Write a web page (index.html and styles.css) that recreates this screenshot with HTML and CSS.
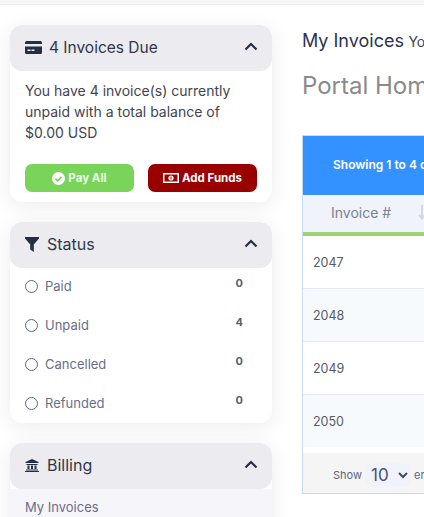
FILE: index.html
```html
<!DOCTYPE html>
<html>

<head>
    <meta content="width=device-width, initial-scale=1" name="viewport" />
    <title>My Invoices</title>
    <link rel="stylesheet" href="styles.css">
</head>

<body>
    <div class="topStrip"></div>
    <div class="page">
        <div class="sidebar">
            <div class="card">
                <div class="cardHead">
                    <svg class="headIcon" width="17" height="13" viewBox="0 0 17 13">
                        <path d="M1.5 0h14A1.5 1.5 0 0 1 17 1.5V3H0V1.5A1.5 1.5 0 0 1 1.5 0z" />
                        <path fill-rule="evenodd" d="M0 5.500h17v6A1.500 1.500 0 0 1 15.500 13h-14A1.500 1.500 0 0 1 0 11.500zM2.500 8.500v1.500h3V8.500zM6.500 8.500v1.500h3V8.500z" />
                    </svg>
                    <span class="headTitle headTitleDue">4 Invoices Due</span>
                    <svg class="chevron" width="14" height="9" viewBox="0 0 14 9">
                        <path d="M1.500 7.500L7 2l5.500 5.500" />
                    </svg>
                </div>
                <div class="dueBody">
                    <p class="dueText">You have 4 invoice(s) currently unpaid with a total balance of $0.00 USD</p>
                    <div class="dueButtons">
                        <button class="btn btnGreen">
                            <svg width="13" height="13" viewBox="0 0 13 13">
                                <circle cx="6.500" cy="6.500" r="6.500" fill="#fff" />
                                <path d="M3.500 6.700l2.100 2.100 3.900-4" fill="none" stroke="#7bd45a" stroke-width="1.700" />
                            </svg>
                            Pay All
                        </button>
                        <button class="btn btnRed">
                            <svg width="16" height="10" viewBox="0 0 16 10">
                                <path fill="#fff" fill-rule="evenodd" d="M0 0h16v10H0zM1.500 1.500v7h13v-7z" />
                                <circle cx="8" cy="5" r="2.600" fill="#fff" />
                                <rect x="7.500" y="3.500" width="1" height="3" fill="#990000" />
                            </svg>
                            Add Funds
                        </button>
                    </div>
                </div>
            </div>

            <div class="card">
                <div class="cardHead">
                    <svg class="headIcon headIconSmall" width="14" height="15" viewBox="0 0 14 15">
                        <path d="M0 0h14v1.500L8.800 7.500V15L5.200 12.500v-5L0 1.500z" />
                    </svg>
                    <span class="headTitle">Status</span>
                    <svg class="chevron" width="14" height="9" viewBox="0 0 14 9">
                        <path d="M1.500 7.500L7 2l5.500 5.500" />
                    </svg>
                </div>
                <div class="statusList">
                    <div class="statusRow"><span class="radio"></span><span class="statusName">Paid</span><span class="statusCount">0</span></div>
                    <div class="statusRow"><span class="radio"></span><span class="statusName">Unpaid</span><span class="statusCount">4</span></div>
                    <div class="statusRow"><span class="radio"></span><span class="statusName">Cancelled</span><span class="statusCount">0</span></div>
                    <div class="statusRow"><span class="radio"></span><span class="statusName">Refunded</span><span class="statusCount">0</span></div>
                </div>
            </div>

            <div class="card">
                <div class="cardHead">
                    <svg class="headIcon headIconSmall" width="14" height="13" viewBox="0 0 14 13">
                        <path d="M7 0l6.500 3v1H.5V3zM1.500 5h11v1h-11zM2.500 6.500h2v3.500h-2zM6 6.500h2v3.500H6zM9.500 6.500h2v3.500h-2zM1 10.500h12V11.500H1zM0 12h14v1H0z" />
                    </svg>
                    <span class="headTitle">Billing</span>
                    <svg class="chevron" width="14" height="9" viewBox="0 0 14 9">
                        <path d="M1.500 7.500L7 2l5.500 5.500" />
                    </svg>
                </div>
                <div class="billingBody">My Invoices</div>
            </div>
        </div>

        <div class="main">
            <div class="crumb"><span class="crumbTitle">My Invoices</span> <span class="crumbSub">Your Invoices History</span></div>
            <h1 class="portal">Portal Home</h1>

            <div class="tableBox">
                <div class="tableInfo">Showing 1 to 4 of 4 entries</div>
                <div class="colHead">
                    <span>Invoice #</span>
                    <svg width="8" height="15" viewBox="0 0 8 15">
                        <path d="M4 0v13M1 10l3 3.500L7 10" fill="none" stroke="#d5d8de" stroke-width="2" />
                    </svg>
                </div>
                <div class="tableRow">2047</div>
                <div class="tableRow rowAlt">2048</div>
                <div class="tableRow">2049</div>
                <div class="tableRow rowAlt rowLast">2050</div>
                <div class="tableFoot">
                    <span>Show</span>
                    <span class="lengthSelect">10
                        <svg width="10" height="7" viewBox="0 0 10 7">
                            <path d="M1 1l4 4 4-4" fill="none" stroke="#3f4a6b" stroke-width="2" />
                        </svg>
                    </span>
                    <span>entries</span>
                </div>
            </div>
        </div>
    </div>
</body>

</html>
```

FILE: styles.css
```css
html,
body {
    height: 100%;
    margin: 0;
    overflow: hidden;
    background-color: #fff;
    font-family: "Inter", sans-serif;
    color: #3c4257;
}

.topStrip {
    height: 4px;
    background-color: #f6f6f6;
    border-bottom: 1px solid #ececec;
}

.page {
    display: flex;
    width: 900px;
}

.sidebar {
    flex: none;
    width: 262px;
    padding: 20px 0 0 10px;
    display: flex;
    flex-direction: column;
    gap: 20px;
}

.card {
    background-color: #fff;
    border-radius: 12px;
    box-shadow: 0 4px 20px rgba(40, 40, 70, 0.09);
    overflow: hidden;
}

.cardHead {
    height: 46px;
    box-sizing: border-box;
    display: flex;
    align-items: center;
    padding: 0 15px 2px;
    background-color: #ebebf0;
    border-radius: 12px;
}

.headIcon {
    fill: #262e44;
    margin-right: 7px;
    flex: none;
}

.headIconSmall {
    margin-right: 8px;
}

.headTitle {
    font-size: 16px;
    color: #30374a;
}

.headTitleDue {
    font-size: 15.500px;
}

.chevron {
    margin-left: auto;
    margin-right: -1px;
    margin-bottom: 2px;
    fill: none;
    stroke: #262e44;
    stroke-width: 2.200;
}

.dueBody {
    padding: 9px 15px 10px;
}

.dueText {
    margin: 0;
    font-size: 14px;
    line-height: 21px;
    color: #3f4452;
}

.dueButtons {
    display: flex;
    gap: 14px;
    margin-top: 21px;
}

.btn {
    flex: 1;
    height: 28px;
    border: none;
    border-radius: 7px;
    padding: 0;
    display: flex;
    align-items: center;
    justify-content: center;
    gap: 3px;
    font-family: "Inter", sans-serif;
    font-size: 11.500px;
    font-weight: bold;
    color: #fff;
}

.btnGreen {
    background-color: #7bd45a;
    color: #eefbe8;
}

.btnRed {
    background-color: #990000;
}

.statusList {
    margin-top: -1px;
}

.statusRow {
    height: 39px;
    display: flex;
    align-items: center;
    padding: 0 15px;
}

.radio {
    width: 11px;
    height: 11px;
    border: 1.500px solid #5f6584;
    border-radius: 50%;
    flex: none;
    margin-right: 7px;
}

.statusName {
    margin-top: -1px;
    font-size: 13px;
    color: #6a6f88;
}

.statusCount {
    margin-left: auto;
    margin-right: 14px;
    margin-top: -7px;
    font-size: 11px;
    font-weight: bold;
    color: #5c5f6b;
}

.billingBody {
    background-color: #f5f5fa;
    padding: 10px 15px 60px;
    font-size: 13px;
    color: #6a6f88;
}

.main {
    flex: none;
    width: 600px;
    padding: 0 0 0 30px;
}

.crumb {
    margin-top: 23px;
    line-height: 26px;
}

.crumbTitle {
    font-size: 18px;
    color: #2c3350;
}

.crumbSub {
    font-size: 14px;
    color: #3c4257;
}

.portal {
    margin: 16px 0 0;
    font-size: 24px;
    line-height: 30px;
    font-weight: normal;
    color: #8a8a8a;
}

.tableBox {
    margin-top: 34px;
    border: 1px solid #c5dcf3;
    background-color: #fff;
}

.tableInfo {
    height: 59px;
    box-sizing: border-box;
    display: flex;
    align-items: center;
    padding: 0 0 3px 30px;
    background-color: #3392ff;
    color: #fff;
    font-size: 12px;
    font-weight: 600;
}

.colHead {
    height: 35px;
    display: flex;
    align-items: center;
    gap: 27px;
    padding: 0 0 2px 28px;
    background-color: #f0f4fa;
    border-bottom: 4px solid #9ed36f;
    font-size: 14px;
    color: #7c8194;
}

.tableRow {
    height: 52px;
    display: flex;
    align-items: center;
    padding-left: 10px;
    border-bottom: 1px solid #e3e7f0;
    font-size: 12.500px;
    color: #555a68;
}

.rowAlt {
    background-color: #f7fafd;
}

.rowLast {
    border-bottom: none;
}

.tableFoot {
    margin-top: 6px;
    height: 40px;
    box-sizing: border-box;
    display: flex;
    align-items: center;
    gap: 3px;
    padding: 4px 0 0 30px;
    background-color: #f5f5f5;
    font-size: 11px;
    color: #5f6584;
}

.lengthSelect {
    width: 46px;
    height: 24px;
    box-sizing: border-box;
    display: flex;
    align-items: center;
    justify-content: space-between;
    padding: 0 3px 0 6px;
    border-radius: 8px;
    background-color: #f0f3fc;
    font-size: 17px;
    color: #4a5070;
}
```
